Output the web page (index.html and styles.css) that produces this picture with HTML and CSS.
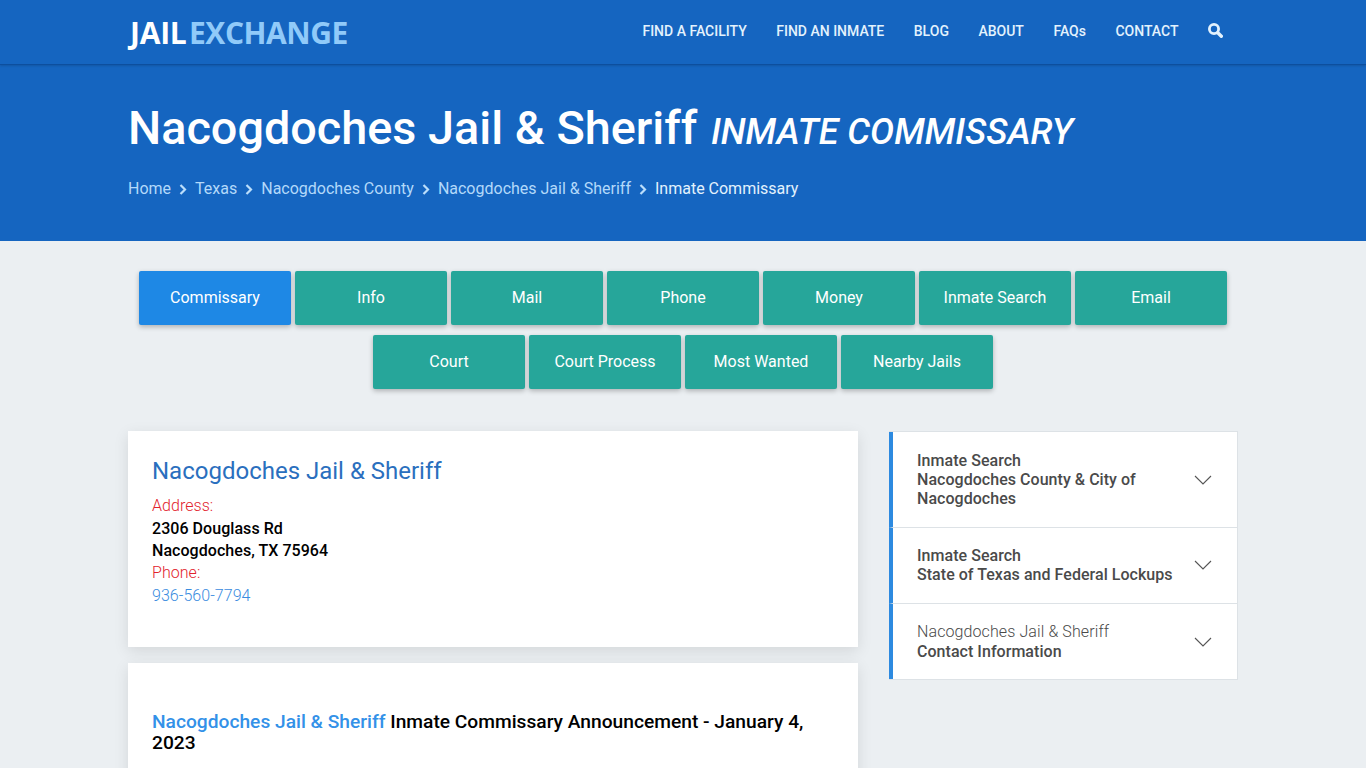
FILE: index.html
```html
<!DOCTYPE html>
<html lang="en">
<head>
  <meta charset="UTF-8">
  <title>Nacogdoches Jail &amp; Sheriff Inmate Commissary</title>
  <link rel="stylesheet" href="styles.css">
</head>
<body>

  <header class="topbar">
    <div class="wrap topbar-row">
      <a class="logo" href="#">JAIL<span>EXCHANGE</span></a>
      <nav class="topnav">
        <a href="#">FIND A FACILITY</a>
        <a href="#">FIND AN INMATE</a>
        <a href="#">BLOG</a>
        <a href="#">ABOUT</a>
        <a href="#">FAQs</a>
        <a href="#">CONTACT</a>
        <a href="#" class="search-link" aria-label="Search">
          <svg width="15" height="15" viewBox="0 0 15 15">
            <circle cx="6" cy="6" r="4.6" fill="none" stroke="#e3f2fd" stroke-width="2.8"/>
            <path d="M9.8 9.8 L13.3 13.3" stroke="#e3f2fd" stroke-width="3.4" stroke-linecap="round"/>
          </svg>
        </a>
      </nav>
    </div>
  </header>

  <section class="hero">
    <div class="wrap">
      <h1>Nacogdoches Jail &amp; Sheriff <em>INMATE COMMISSARY</em></h1>
      <div class="crumbs">
        <a href="#">Home</a>
        <svg class="crumb-sep" width="8" height="11" viewBox="0 0 8 11"><path d="M1.5 1 L6 5.5 L1.5 10" fill="none" stroke="#bbdefb" stroke-width="2.2"/></svg>
        <a href="#">Texas</a>
        <svg class="crumb-sep" width="8" height="11" viewBox="0 0 8 11"><path d="M1.5 1 L6 5.5 L1.5 10" fill="none" stroke="#bbdefb" stroke-width="2.2"/></svg>
        <a href="#">Nacogdoches County</a>
        <svg class="crumb-sep" width="8" height="11" viewBox="0 0 8 11"><path d="M1.5 1 L6 5.5 L1.5 10" fill="none" stroke="#bbdefb" stroke-width="2.2"/></svg>
        <a href="#">Nacogdoches Jail &amp; Sheriff</a>
        <svg class="crumb-sep" width="8" height="11" viewBox="0 0 8 11"><path d="M1.5 1 L6 5.5 L1.5 10" fill="none" stroke="#bbdefb" stroke-width="2.2"/></svg>
        <span class="crumb-current">Inmate Commissary</span>
      </div>
    </div>
  </section>

  <div class="tabs">
    <a class="tab tab-active" href="#">Commissary</a>
    <a class="tab" href="#">Info</a>
    <a class="tab" href="#">Mail</a>
    <a class="tab" href="#">Phone</a>
    <a class="tab" href="#">Money</a>
    <a class="tab" href="#">Inmate Search</a>
    <a class="tab" href="#">Email</a>
    <a class="tab" href="#">Court</a>
    <a class="tab" href="#">Court Process</a>
    <a class="tab" href="#">Most Wanted</a>
    <a class="tab" href="#">Nearby Jails</a>
  </div>

  <div class="wrap columns">
    <main class="main-col">
      <div class="card card-address">
        <h2>Nacogdoches Jail &amp; Sheriff</h2>
        <div class="label">Address:</div>
        <div class="strong-line">2306 Douglass Rd</div>
        <div class="strong-line">Nacogdoches, TX 75964</div>
        <div class="label">Phone:</div>
        <a class="phone" href="#">936-560-7794</a>
      </div>
      <div class="card card-news">
        <h3><a href="#">Nacogdoches Jail &amp; Sheriff</a> Inmate Commissary Announcement - January 4, 2023</h3>
      </div>
    </main>

    <aside class="side-col">
      <a class="side-item item-tall" href="#">
        <span><b>Inmate Search</b><br><b>Nacogdoches County &amp; City of Nacogdoches</b></span>
        <svg class="chev" width="18" height="10" viewBox="0 0 18 10"><path d="M1 1 L9 9 L17 1" fill="none" stroke="#555" stroke-width="1.1"/></svg>
      </a>
      <a class="side-item item-mid" href="#">
        <span><b>Inmate Search</b><br><b>State of Texas and Federal Lockups</b></span>
        <svg class="chev" width="18" height="10" viewBox="0 0 18 10"><path d="M1 1 L9 9 L17 1" fill="none" stroke="#555" stroke-width="1.1"/></svg>
      </a>
      <a class="side-item item-last" href="#">
        <span>Nacogdoches Jail &amp; Sheriff<br><b>Contact Information</b></span>
        <svg class="chev" width="18" height="10" viewBox="0 0 18 10"><path d="M1 1 L9 9 L17 1" fill="none" stroke="#555" stroke-width="1.1"/></svg>
      </a>
    </aside>
  </div>

</body>
</html>
```

FILE: styles.css
```css
html {
  height: 768px;
  overflow: hidden;
}
body {
  margin: 0;
  background: #ebeff2;
  font-family: Roboto, "Liberation Sans", sans-serif;
  font-size: 16px;
  color: #000;
}
a {
  text-decoration: none;
}
.wrap {
  width: 1110px;
  margin: 0 auto;
}
.topbar {
  height: 64px;
  background: #1565c0;
  border-bottom: 1px solid #0d4f9e;
  box-shadow: 0 1px 2px rgba(0, 0, 0, 0.15);
  position: relative;
}
.topbar-row {
  display: flex;
  justify-content: space-between;
  align-items: center;
  height: 64px;
}
.logo {
  font-family: "Open Sans", sans-serif;
  font-weight: 700;
  font-size: 30px;
  letter-spacing: -0.25px;
  color: #fff;
  margin-left: 2px;
}
.logo span {
  color: #90caf9;
  margin-left: 2.5px;
  letter-spacing: -0.45px;
}
.topnav {
  display: flex;
  align-items: center;
  gap: 29.5px;
  margin-right: 15px;
  margin-top: -3px;
}
.topnav a {
  color: #e3f2fd;
  font-size: 14px;
  font-weight: 500;
}
.search-link {
  display: flex;
}
.hero {
  background: #1565c0;
  height: 176px;
}
.hero h1 {
  margin: 0;
  padding-top: 35px;
  font-size: 46.8px;
  line-height: 56px;
  font-weight: 500;
  color: #fff;
}
.hero em {
  font-size: 36px;
  font-weight: 500;
  margin-left: 2px;
}
.crumbs {
  display: flex;
  align-items: center;
  gap: 8px;
  margin-top: 17px;
  line-height: 24px;
}
.crumbs a {
  color: #b3d9fa;
}
.crumb-current {
  color: #e3f2fd;
}
.tabs {
  width: 1100px;
  margin: 30px auto 0;
  display: flex;
  flex-wrap: wrap;
  justify-content: center;
  gap: 10px 4px;
}
.tab {
  width: 152px;
  height: 54px;
  line-height: 54px;
  text-align: center;
  background: #26a69a;
  color: #fff;
  border-radius: 2px;
  box-shadow: 0 2px 5px rgba(0, 0, 0, 0.26);
}
.tab-active {
  background: #1e88e5;
}
.columns {
  display: flex;
  align-items: flex-start;
  justify-content: space-between;
  margin-top: 42px;
}
.main-col {
  width: 730px;
}
.card {
  background: #fff;
  padding: 0 24px;
  box-shadow: 0 4px 14px rgba(0, 0, 0, 0.1);
}
.card-address {
  height: 216px;
  box-sizing: border-box;
  padding-top: 24px;
  line-height: 22.4px;
  letter-spacing: 0.05px;
}
.card h2 {
  margin: 0 0 8.2px;
  font-size: 24px;
  line-height: 32px;
  font-weight: 400;
  letter-spacing: 0;
  color: #2a6fbe;
}
.label {
  color: #e2222c;
  font-weight: 300;
}
.strong-line {
  font-weight: 500;
}
.phone {
  color: #3a8ce0;
  font-weight: 300;
}
.card-news {
  margin-top: 16px;
  height: 200px;
  padding-top: 48px;
}
.card-news h3 {
  margin: 0;
  font-size: 19.2px;
  line-height: 21px;
  font-weight: 500;
}
.card-news a {
  color: #3391e8;
}
.side-col {
  width: 349px;
  box-sizing: border-box;
  background: #fff;
  border: 1px solid #dde2e6;
  border-left: 0;
}
.side-item {
  display: flex;
  align-items: center;
  justify-content: space-between;
  box-sizing: border-box;
  height: 76px;
  padding: 0 25px 0 24px;
  border-left: 4px solid #2d8ae0;
  border-bottom: 1px solid #dde2e6;
  color: #4a4a4a;
  line-height: 19.2px;
  font-weight: 300;
  letter-spacing: 0.04px;
}
.side-item.item-tall {
  height: 96px;
}
.side-item.item-mid {
  padding-bottom: 1px;
}
.side-item.item-last {
  height: 75px;
  border-bottom: 0;
  letter-spacing: 0.1px;
}
.side-item b {
  font-weight: 500;
}
.item-last b {
  letter-spacing: 0.04px;
}
.side-item span {
  width: 260px;
}
.chev {
  flex: none;
}
```
